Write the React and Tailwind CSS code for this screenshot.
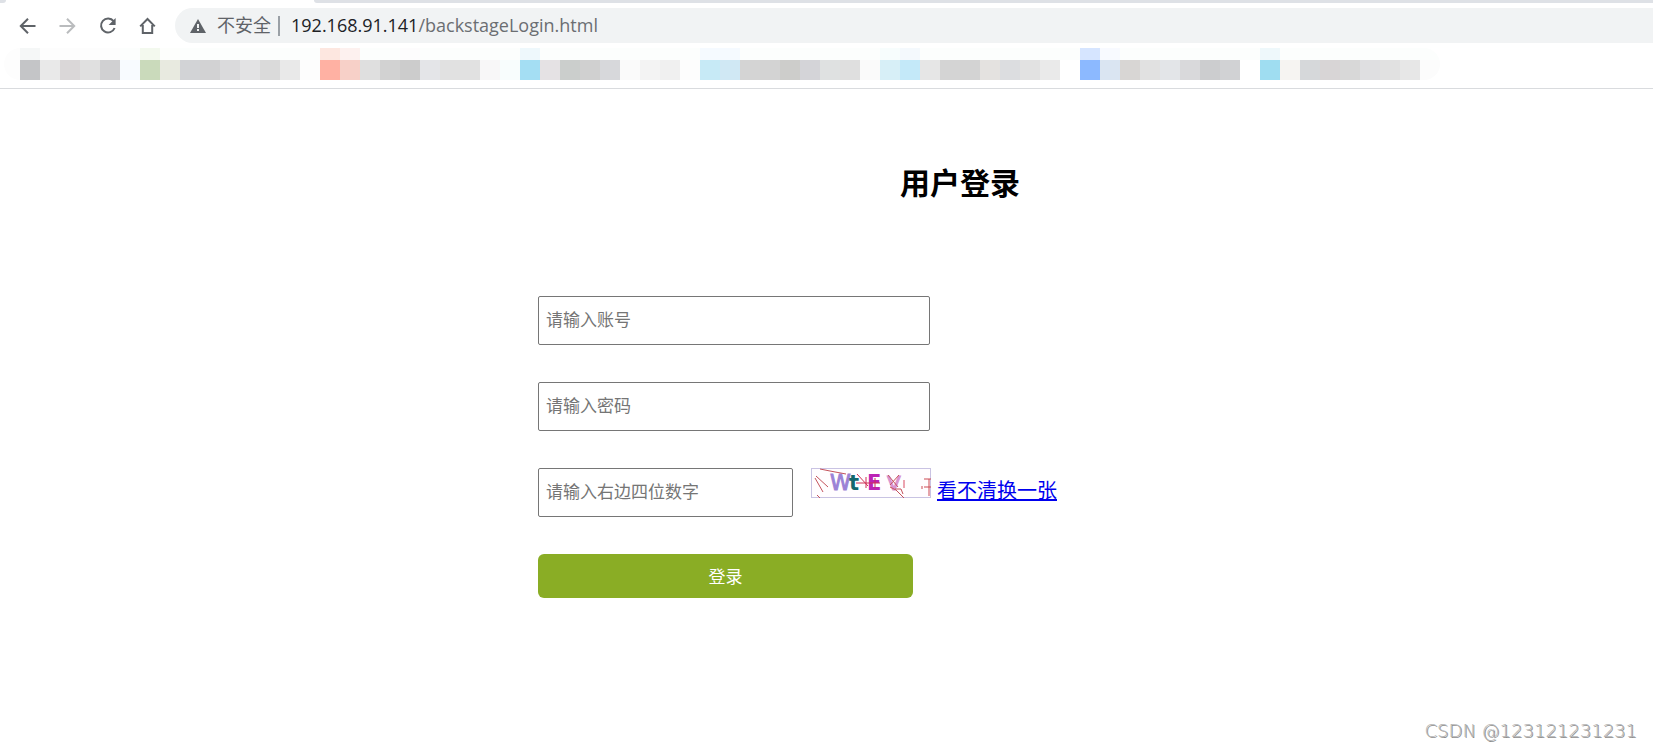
import React from 'react';

// One entry per 20px tile of the bookmarks bar: [upper colour, lower colour]
const tiles = [
  ['bg-[#f5f7f7]', 'bg-[#c4c5c7]'],
  ['bg-[#fdfdfd]', 'bg-[#e9e9e9]'],
  ['bg-[#fdfdfd]', 'bg-[#dad7d8]'],
  ['bg-[#fdfdfd]', 'bg-[#e0e0e0]'],
  ['bg-[#fdfdfd]', 'bg-[#d0d0d2]'],
  ['bg-[#fcfefd]', 'bg-[#f8fbff]'],
  ['bg-[#f3f9ee]', 'bg-[#cadabb]'],
  ['bg-[#fdfefc]', 'bg-[#e8eae0]'],
  ['bg-[#fcfefd]', 'bg-[#d2d3d6]'],
  ['bg-[#fcfefd]', 'bg-[#d2d2d3]'],
  ['bg-[#fcfefd]', 'bg-[#dadadc]'],
  ['bg-[#fcfefd]', 'bg-[#e3e3e4]'],
  ['bg-[#fcfefd]', 'bg-[#dadada]'],
  ['bg-[#fcfefd]', 'bg-[#e9e9e9]'],
  ['bg-[#fcfefd]', 'bg-[#fdfdfd]'],
  ['bg-[#fde7e0]', 'bg-[#ffb1a3]'],
  ['bg-[#fdf1ef]', 'bg-[#f7d0c8]'],
  ['bg-[#fcfefd]', 'bg-[#dfdfdf]'],
  ['bg-[#fcfefd]', 'bg-[#d2d2d2]'],
  ['bg-[#fdfcfd]', 'bg-[#cccccc]'],
  ['bg-[#fcfefd]', 'bg-[#e4e5e8]'],
  ['bg-[#fcfefd]', 'bg-[#e1e1e1]'],
  ['bg-[#fcfefd]', 'bg-[#e1e1e1]'],
  ['bg-[#fcfefd]', 'bg-[#f8f7f8]'],
  ['bg-[#fcfefd]', 'bg-[#f8fdfd]'],
  ['bg-[#eef8fc]', 'bg-[#a4def3]'],
  ['bg-[#fcfefd]', 'bg-[#e5e2e4]'],
  ['bg-[#fcfefd]', 'bg-[#cbcecc]'],
  ['bg-[#fcfefd]', 'bg-[#d0d0d0]'],
  ['bg-[#fcfefd]', 'bg-[#d7d8db]'],
  ['bg-[#fcfefd]', 'bg-[#fafafa]'],
  ['bg-[#fcfefd]', 'bg-[#f3f3f3]'],
  ['bg-[#fcfefd]', 'bg-[#f0f0f0]'],
  ['bg-[#fcfefd]', 'bg-[#fdfdfd]'],
  ['bg-[#f5faff]', 'bg-[#c7eaf6]'],
  ['bg-[#f5faff]', 'bg-[#d0e8f4]'],
  ['bg-[#fcfefd]', 'bg-[#d4d4d4]'],
  ['bg-[#fcfefd]', 'bg-[#d3d3d3]'],
  ['bg-[#fcfefd]', 'bg-[#cdcdcb]'],
  ['bg-[#fcfefd]', 'bg-[#d4d4d8]'],
  ['bg-[#fcfefd]', 'bg-[#dfe1e1]'],
  ['bg-[#fcfefd]', 'bg-[#dfdfdf]'],
  ['bg-[#fcfefd]', 'bg-[#fafafa]'],
  ['bg-[#f7fdfd]', 'bg-[#d7eff7]'],
  ['bg-[#f4f9fd]', 'bg-[#c4e9f9]'],
  ['bg-[#fcfefd]', 'bg-[#e6e6e6]'],
  ['bg-[#fcfefd]', 'bg-[#d4d4d4]'],
  ['bg-[#fcfefd]', 'bg-[#d3d3d3]'],
  ['bg-[#fcfefd]', 'bg-[#e4e2e0]'],
  ['bg-[#fcfefd]', 'bg-[#dcdde0]'],
  ['bg-[#fcfefd]', 'bg-[#e2e2e2]'],
  ['bg-[#fcfefd]', 'bg-[#eaeaea]'],
  ['bg-[#fcfefd]', 'bg-white'],
  ['bg-[#d6e5ff]', 'bg-[#8cb9ff]'],
  ['bg-[#f8faff]', 'bg-[#dae5f2]'],
  ['bg-[#fcfefd]', 'bg-[#d8d6d4]'],
  ['bg-[#fcfefd]', 'bg-[#e1e1e1]'],
  ['bg-[#fcfefd]', 'bg-[#e3e5e8]'],
  ['bg-[#fcfefd]', 'bg-[#d9d9db]'],
  ['bg-[#fcfefd]', 'bg-[#cccdcf]'],
  ['bg-[#fcfefd]', 'bg-[#d1d2d4]'],
  ['bg-[#fcfefd]', 'bg-white'],
  ['bg-[#eef8fb]', 'bg-[#9fddf1]'],
  ['bg-[#fcfefd]', 'bg-[#f6f4f2]'],
  ['bg-[#fcfefd]', 'bg-[#d6d8da]'],
  ['bg-[#fcfefd]', 'bg-[#d8d5d6]'],
  ['bg-[#fcfefd]', 'bg-[#d8d8d8]'],
  ['bg-[#fcfefd]', 'bg-[#dfdfe1]'],
  ['bg-[#fcfefd]', 'bg-[#e1e1e1]'],
  ['bg-[#fcfefd]', 'bg-[#e7e7e7]'],
  ['bg-[#fcfefd]', 'bg-[#fcfcfc]'],
];

const NavButton = ({ label, disabled, children }) => (
  <button
    type="button"
    aria-label={label}
    disabled={disabled}
    className={`flex size-5 items-center justify-center ${disabled ? 'text-[#babcbe]' : 'text-[#5f6368]'}`}
  >
    <svg viewBox="0 0 20 20" className="size-5" fill="none" stroke="currentColor" strokeWidth="2">
      {children}
    </svg>
  </button>
);

const BrowserBar = () => (
  <header className="border-b border-[#d9dbde]">
    {/* Bottom edge of the tab strip */}
    <div className="flex h-[3px] justify-between">
      <div className="w-[6px] rounded-br-full bg-[#dee1e6]"></div>
      <div className="ml-[308px] flex-1 rounded-bl-lg bg-[#dee1e6]"></div>
    </div>

    {/* Toolbar */}
    <div className="mt-[5px] flex h-[35px] items-center pl-[18px]">
      <nav className="flex gap-5">
        <NavButton label="后退">
          <path d="M17.5 10H3M10 2.8 2.8 10l7.2 7.2" />
        </NavButton>
        <NavButton label="前进" disabled>
          <path d="M1.5 10H16M9 2.8l7.2 7.2L9 17.2" />
        </NavButton>
        <NavButton label="重新加载">
          <path d="M15.6 5.2A7 7 0 1 0 16.6 12" />
          <path d="M17.6 2v7h-7z" fill="currentColor" stroke="none" />
        </NavButton>
        <NavButton label="主页">
          <path d="M2.2 10.4 9.5 3l7.3 7.4M4.8 9v8h9.4V9" />
        </NavButton>
      </nav>
      <div className="ml-[17px] flex h-full flex-1 items-center rounded-l-full bg-[#f1f3f4] pl-[15px] font-['Open_Sans','Noto_Sans_CJK_SC',sans-serif] text-[18px]">
        <svg viewBox="0 0 16 14" className="h-[14px] w-4">
          <path d="M8 0l8 14H0z" fill="#5f6368" />
          <path d="M7 5h2v4H7zM7 10h2v2H7z" fill="#f1f3f4" />
        </svg>
        <span className="ml-[11px] text-[#5f6368]">不安全</span>
        <span className="ml-[7px] h-5 w-[2px] bg-[#9aa0a6]"></span>
        <span className="ml-[11px] text-[#202124]">
          192.168.91.141<span className="text-[#6b6e72]">/backstageLogin.html</span>
        </span>
      </div>
    </div>

    {/* Bookmarks */}
    <div className="mt-[5px] mb-2 ml-1 flex h-8">
      <div className="w-4 rounded-l-full bg-[#fdfdfd]"></div>
      {tiles.map(([upper, lower], i) => (
        <div key={i} className={`w-5 overflow-hidden ${i === tiles.length - 1 ? 'rounded-r-full' : ''}`}>
          <div className={`h-3 ${upper}`}></div>
          <div className={`h-5 ${lower}`}></div>
        </div>
      ))}
    </div>
  </header>
);

const Captcha = () => (
  <svg viewBox="0 0 120 30" role="img" aria-label="验证码" className="h-[30px] w-[120px]">
    <rect x="0.5" y="0.5" width="119" height="29" fill="#fffdff" stroke="#c9c3e3" />
    <g fontFamily="DejaVu Sans, sans-serif">
      <text x="19" y="22" fontSize="21" fill="#9b82d6" stroke="#9b82d6">W</text>
      <text x="38" y="22" fontSize="21" fontWeight="bold" fill="#14666e">t</text>
      <text x="56" y="22" fontSize="21" fontWeight="bold" fill="#bb22b5">E</text>
      <text x="76" y="22" fontSize="20" stroke="#d993cf" fill="#d993cf">V</text>
    </g>
    <g fill="none" stroke="#c4525c" strokeWidth="1">
      <path d="M9 1l10 2 16 3M5 8l12 11M4 10l8 14M6 27l3 3" />
      <path d="M45 15h24M55 9v11M46 6l11 12M64 10v10" stroke="#cf2f55" />
      <path d="M77 7l10 12M88 7l-9 10M79 19l6 3 8 8M84 21h6l2 5" />
      <path d="M93 12v8" stroke="#d94a62" />
      <path d="M113 11h7M118 11v17M113 19h7M111 18v3" stroke="#cc4a55" />
    </g>
  </svg>
);

const Field = ({ id, label, type = 'text', className }) => (
  <input
    id={id}
    name={id}
    type={type}
    aria-label={label}
    placeholder={label}
    className={`h-[49px] rounded-[2px] border border-[#767676] bg-white px-[7px] pb-1 text-[17px] placeholder:text-[#757575] ${className}`}
  />
);

const LoginForm = () => (
  <form className="ml-[271px] flex flex-col items-start gap-[37px]" onSubmit={(e) => e.preventDefault()}>
    <Field id="account" label="请输入账号" className="w-[392px]" />
    <Field id="password" type="password" label="请输入密码" className="w-[392px]" />
    <div className="flex items-start">
      <Field id="code" label="请输入右边四位数字" className="w-[255px]" />
      <div className="ml-[18px] flex items-start gap-[6px]">
        <Captcha />
        <a href="#" className="mt-[7px] text-[20px] leading-[30px] text-[#0000ee] underline decoration-2">
          看不清换一张
        </a>
      </div>
    </div>
    <button type="submit" className="h-[44px] w-[375px] rounded-md bg-[#8aad25] text-[17px] text-white">
      登录
    </button>
  </form>
);

const App = () => {
  return (
    <div className="flex min-h-screen flex-col bg-white font-['Noto_Sans_CJK_SC',sans-serif]">
      <BrowserBar />
      <main className="ml-[267px] flex-1 pt-[70px]">
        <h1 className="mb-[93px] text-center text-[30px] leading-[44px] font-bold text-black">用户登录</h1>
        <LoginForm />
      </main>
      <footer className="pr-4 pb-1 text-right font-['DejaVu_Sans',sans-serif] text-[18px] leading-6 font-extralight text-[#b4b4b4] [text-shadow:1px_1px_0_#8c8c8c]">
        CSDN @123121231231
      </footer>
    </div>
  );
};

export default App;
